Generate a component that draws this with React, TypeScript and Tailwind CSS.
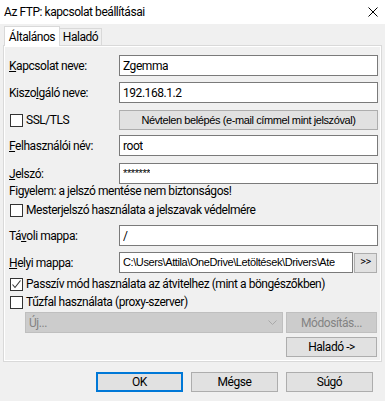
import React from 'react';

const ui = "font-['Roboto','Liberation_Sans',sans-serif] tracking-[-0.45px]";
const ms = "font-['Liberation_Sans',Arial,sans-serif] tracking-[-0.4px]";

function Field({ value, className = '', mono = false }: { value: string; className?: string; mono?: boolean }) {
  return (
    <div
      className={`h-[21px] bg-white border border-[#7a7a7a] pl-[3px] flex items-center overflow-hidden whitespace-nowrap text-black ${
        mono ? `${ms} text-[11px]` : `${ui} text-[12px]`
      } ${className}`}
    >
      <span className="block overflow-hidden">{value}</span>
    </div>
  );
}

function Check({ checked = false }: { checked?: boolean }) {
  return (
    <div className="w-[13px] h-[13px] border border-[#333] bg-white flex items-center justify-center shrink-0">
      {checked && (
        <svg width="11" height="11" viewBox="0 0 11 11">
          <polyline points="1.5,5.5 4,8.5 9.5,1.5" fill="none" stroke="#333" strokeWidth="1.1" />
        </svg>
      )}
    </div>
  );
}

function Btn({ children, className = '', disabled = false, font = ui }: { children: React.ReactNode; className?: string; disabled?: boolean; font?: string }) {
  return (
    <div
      className={`h-[20px] flex items-center justify-center border whitespace-nowrap ${font} ${
        disabled ? 'bg-[#cccccc] border-[#bfbfbf] text-[#838383]' : 'bg-[#e1e1e1] border-[#adadad] text-black'
      } ${className}`}
    >
      {children}
    </div>
  );
}

function Label({ children }: { children: React.ReactNode }) {
  return <div className={`w-[110px] shrink-0 text-[12px] ${ui} text-black`}>{children}</div>;
}

export default function App() {
  return (
    <div className={`w-[385px] h-[401px] bg-[#f0f0f0] flex flex-col overflow-hidden ${ui}`}>
      {/* title bar */}
      <div className="h-[24px] bg-white flex items-center justify-between pl-[4px] pr-[7px] shrink-0">
        <span className="text-[12px] text-black">Az FTP: kapcsolat beállításai</span>
        <svg width="10" height="10" viewBox="0 0 10 10">
          <path d="M0.5 0.5 L9.5 9.5 M9.5 0.5 L0.5 9.5" stroke="#000" strokeWidth="1" />
        </svg>
      </div>

      {/* tabs */}
      <div className="h-[21px] flex items-end pl-[4px] shrink-0">
        <div className="h-[20px] w-[56px] bg-white border border-b-0 border-[#d9d9d9] flex items-center justify-center text-[12px] text-black relative z-10 -mb-px">
          Általános
        </div>
        <div className="h-[17px] w-[42px] bg-[#f0f0f0] border border-l-0 border-b-0 border-[#d9d9d9] flex items-center justify-center text-[12px] text-black">
          Haladó
        </div>
      </div>

      {/* panel */}
      <div className="ml-[3px] w-[379px] h-[317px] shrink-0 border border-[#d9d9d9] bg-[#f0f0f0] shadow-[inset_0_0_0_1px_#ffffff] flex flex-col">
        <div className="mt-[9px] flex items-center pl-[5px]">
          <Label>
            <span className="underline">K</span>apcsolat neve:
          </Label>
          <Field value="Zgemma" className="w-[259px]" />
        </div>
        <div className="mt-[6px] flex items-center pl-[5px]">
          <Label>
            Kiszo<span className="underline">l</span>gáló neve:
          </Label>
          <Field value="192.168.1.2" className="w-[259px]" />
        </div>
        <div className="mt-[7px] h-[20px] flex items-center pl-[6px]">
          <div className="w-[109px] flex items-center gap-[3px] text-[12px] text-black">
            <Check />
            <span>SSL/TLS</span>
          </div>
          <Btn className="w-[259px] text-[11px]" font={ms}>
            Névtelen belépés (e-mail címmel mint jelszóval)
          </Btn>
        </div>
        <div className="mt-[5px] flex items-center pl-[5px]">
          <Label>
            <span className="underline">F</span>elhasználói név:
          </Label>
          <Field value="root" className="w-[259px]" />
        </div>
        <div className="mt-[7px] flex items-center pl-[5px]">
          <Label>
            <span className="underline">J</span>elszó:
          </Label>
          <Field value="*******" className="w-[259px]" mono />
        </div>
        <div className="h-[14px] flex items-center pl-[5px] text-[12px] text-black">
          Figyelem: a jelszó mentése nem biztonságos!
        </div>
        <div className="mt-[5px] h-[14px] flex items-center gap-[3px] pl-[6px] text-[12px] text-black">
          <Check />
          <span>Mesterjelszó használata a jelszavak védelmére</span>
        </div>
        <div className="mt-[8px] flex items-center pl-[5px]">
          <Label>
            Tá<span className="underline">v</span>oli mappa:
          </Label>
          <Field value="/" className="w-[259px]" />
        </div>
        <div className="mt-[6px] flex items-center pl-[5px]">
          <Label>
            <span className="underline">H</span>elyi mappa:
          </Label>
          <Field value="C:\Users\Attila\OneDrive\Letöltések\Drivers\Ate" className="w-[234px]" mono />
          <Btn className="ml-[1px] w-[23px] text-[11px]">&gt;&gt;</Btn>
        </div>
        <div className="mt-[4px] h-[14px] flex items-center gap-[3px] pl-[6px] text-[12px] text-black">
          <Check checked />
          <span>Passzív mód használata az átvitelhez (mint a böngészőkben)</span>
        </div>
        <div className="mt-[4px] h-[14px] flex items-center gap-[3px] pl-[6px] text-[12px] text-black">
          <Check />
          <span>Tűzfal használata (proxy-szerver)</span>
        </div>
        <div className="mt-[3px] flex items-center pl-[21px]">
          <div className="w-[258px] h-[21px] bg-[#cccccc] border border-[#bfbfbf] flex items-center justify-between pl-[3px] pr-[5px] text-[12px] text-[#838383]">
            <span>Új...</span>
            <svg width="9" height="6" viewBox="0 0 9 6">
              <polyline points="0.5,0.5 4.5,4.5 8.5,0.5" fill="none" stroke="#a8a8a8" strokeWidth="1" />
            </svg>
          </div>
          <Btn disabled className="ml-[3px] w-[91px] h-[21px] text-[12px]">
            Módosítás...
          </Btn>
        </div>
        <div className="mt-[4px] flex justify-start pl-[282px]">
          <Btn className="w-[91px] text-[12px]">Haladó -&gt;</Btn>
        </div>
      </div>

      {/* dialog buttons */}
      <div className="mt-[10px] flex pl-[96px] gap-[8px]">
        <Btn className="w-[87px] text-[12px] border-2 !border-[#0078d7]">OK</Btn>
        <Btn className="w-[87px] text-[12px]">Mégse</Btn>
        <Btn className="w-[87px] text-[12px]">Súgó</Btn>
      </div>
    </div>
  );
}
